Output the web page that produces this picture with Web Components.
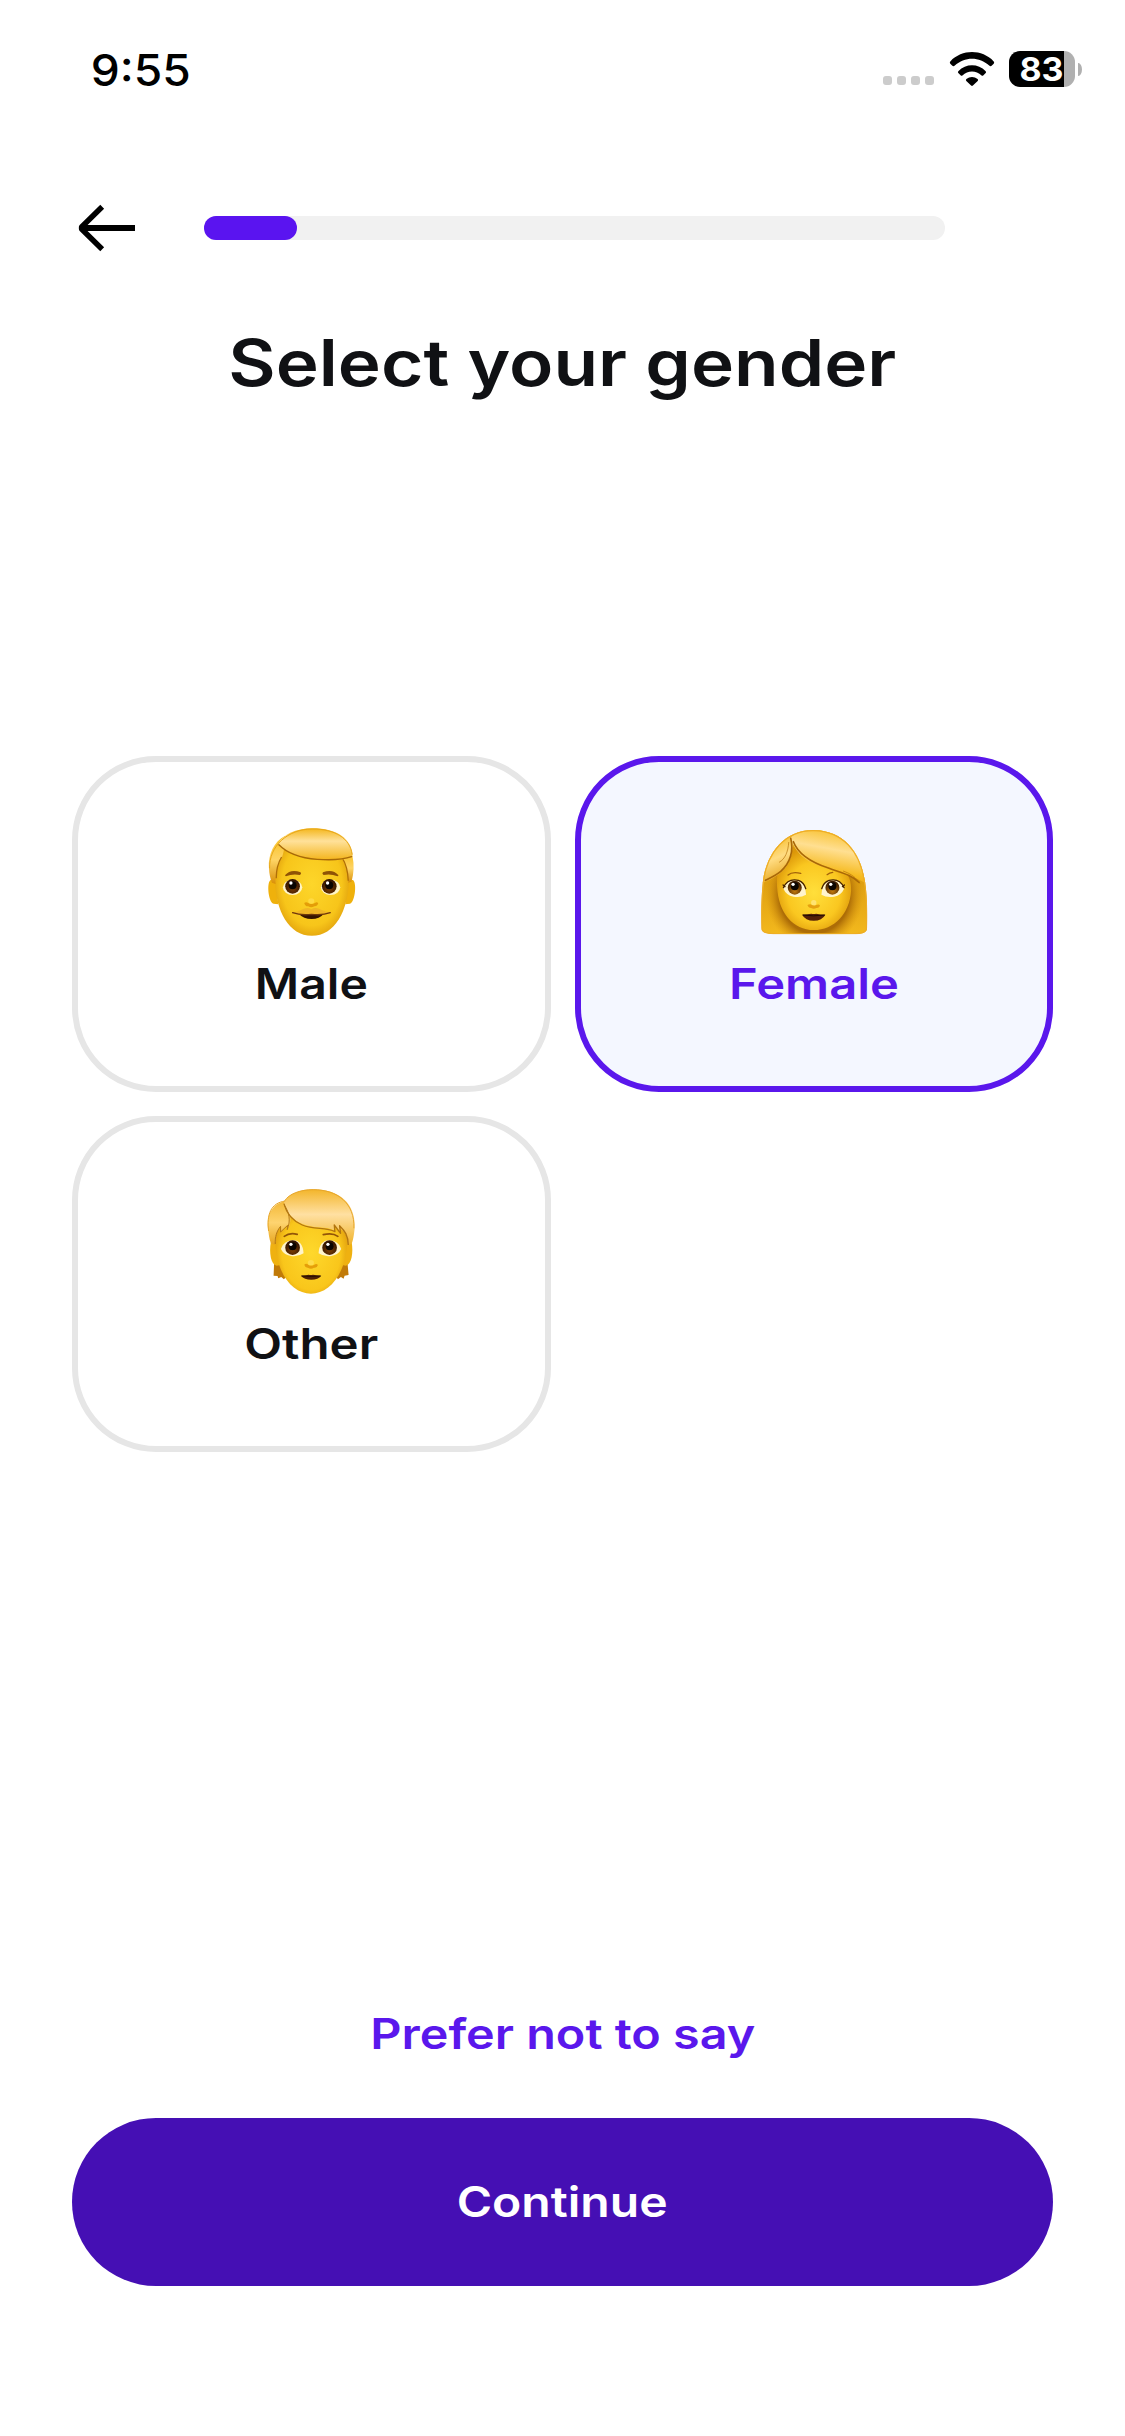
<!DOCTYPE html>
<html lang="en">
<head>
<meta charset="utf-8">
<title>Select your gender</title>
<style>
    body{
        margin: 0;
        background: #fff;
        font-family: Inter, "Liberation Sans", sans-serif;
        color: #101114;
    }
</style>
</head>
<body>
<gender-screen></gender-screen>

<script>
function addTemplate(element, html){
    const template = document.createElement("template");
    template.innerHTML = html;
    element.attachShadow({mode:"open"});
    element.shadowRoot.appendChild(template.content.cloneNode(true));
}

//==============================================================================
class WideText extends HTMLElement{
    constructor() {
        super();
        addTemplate(this, `
            <style>
            :host{ display: flex; justify-content: center; white-space: nowrap; }
            span{ display: inline-block; flex: none; }
            </style>
            <span><slot></slot></span>
        `);
    }
    connectedCallback() {
        const width = Number(this.getAttribute("width"));
        const span = this.shadowRoot.querySelector("span");
        this.style.width = width + "px";
        span.style.transform = "scaleX(" + width / span.getBoundingClientRect().width + ")";
    }
}

//==============================================================================
class StatusBar extends HTMLElement{
    constructor() {
        super();
        addTemplate(this, `
            <style>
            :host{
                display: flex;
                justify-content: space-between;
                box-sizing: border-box;
                height: 138px;
                padding: 42px 43px 0 91px;
                color: #000;
            }
            .time{
                margin-top: 1px;
                font-size: 44px;
                line-height: 54px;
                font-weight: 540;
            }
            .right{ display: flex; align-items: flex-start; }
            .dots{ display: flex; gap: 5px; margin-top: 34px; }
            .dots i{ width: 9px; height: 9px; border-radius: 3px; background: #ccc; }
            .wifi{ margin: 9px 0 0 14px; }
            .battery{
                display: flex;
                align-items: center;
                justify-content: center;
                box-sizing: border-box;
                width: 66px;
                height: 36px;
                margin: 9px 3px 0 13px;
                padding-right: 2px;
                border-radius: 11px;
                background: linear-gradient(90deg, #000 55px, #b0b0b0 55px);
                color: #fff;
                font-size: 33px;
                line-height: 36px;
                font-weight: 700;
            }
            .cap{
                width: 4px;
                height: 13px;
                margin: 21px 0 0 0;
                border-radius: 0 4px 4px 0 / 0 7px 7px 0;
                background: #b0b0b0;
            }
            </style>
            <wide-text class="time" width="100">9:55</wide-text>
            <div class="right">
                <div class="dots"><i></i><i></i><i></i><i></i></div>
                <svg class="wifi" width="48" height="36" viewBox="0 0 48 36">
                    <path d="M2.300 12.800a2 2 0 0 1 0-2.400C14-2 34-2 45.700 10.400a2 2 0 0 1 0 2.400l-1.800 1.800a2 2 0 0 1-2.700 0C31.500 5.400 16.500 5.400 6.800 14.600a2 2 0 0 1-2.700 0z"/>
                    <path d="M10.300 20.200C18 12.300 30 12.300 37.700 20.200q.8.900 0 1.800l-2.500 2.400q-.8.600-1.600 0C28 19.200 20 19.200 14.400 24.400q-.8.600-1.600 0L10.300 22q-.8-.9 0-1.800z"/>
                    <path d="M18.400 28c3.300-2.800 7.900-2.800 11.200 0q1 .9.100 1.900l-4.800 4.700q-.9.800-1.800 0l-4.800-4.700q-.9-1 .1-1.900z"/>
                </svg>
                <div class="battery"><wide-text width="44">83</wide-text></div>
                <div class="cap"></div>
            </div>
        `);
    }
}

//==============================================================================
class StepHeader extends HTMLElement{
    constructor() {
        super();
        addTemplate(this, `
            <style>
            :host{ display: flex; align-items: center; height: 180px; padding: 0 180px 0 78px; }
            svg{ flex: none; }
            .track{
                flex: 1;
                height: 24px;
                margin-left: 66px;
                border-radius: 12px;
                background: #f1f1f1;
            }
            .fill{ height: 24px; border-radius: 12px; background: #5a14f0; }
            </style>
            <svg width="60" height="60" viewBox="0 0 60 60" fill="none" stroke="#000" stroke-width="5.500">
                <path d="M57 30H4" stroke-width="6"/>
                <path d="M24.200 8.800L3.600 29v2L24.200 51.200" stroke-linejoin="round"/>
            </svg>
            <div class="track"><div class="fill"></div></div>
        `);
    }
    connectedCallback() {
        this.shadowRoot.querySelector(".fill").style.width = this.getAttribute("value") + "%";
    }
}

//==============================================================================
const faces = {
    male: `
        <svg width="125" height="125" viewBox="-3.75 0 375 375">
            <defs>
                <radialGradient id="skin" cx=".5" cy=".5" r=".62">
                    <stop offset="0" stop-color="#fdd62a"/><stop offset=".65" stop-color="#f7c51a"/><stop offset="1" stop-color="#d48b05"/>
                </radialGradient>
                <linearGradient id="hair" x1="0" y1="0" x2="0" y2="1">
                    <stop offset="0" stop-color="#f4b61b"/><stop offset=".4" stop-color="#ffe19a"/><stop offset="1" stop-color="#f3b41a"/>
                </linearGradient>
                <linearGradient id="side" x1="0" y1="0" x2="0" y2="1">
                    <stop offset="0" stop-color="#f7bf20"/><stop offset=".5" stop-color="#fed465"/><stop offset="1" stop-color="#d98f08"/>
                </linearGradient>
                <radialGradient id="iris" cx=".5" cy=".65" r=".6">
                    <stop offset="0" stop-color="#7a3d04"/><stop offset="1" stop-color="#321300"/>
                </radialGradient>
            </defs>
            <path fill="#efb10c" d="M62 195c-13 2-9 66 8 71l14 2-7-72zM307 195c13 2 9 66-8 71l-14 2 7-72z"/>
            <path fill="url(#skin)" d="M185 52c-82 0-114 57-111 142 2 94 42 168 111 168s109-74 111-168c3-85-29-142-111-142z"/>
            <path fill="url(#side)" d="M105 62c-34 17-52 57-49 97 1 18 4 31 9 44l11 4c-2-25 4-55 17-77 9-15 10-40 12-68z"/>
            <path fill="url(#side)" d="M277 128c11 17 17 46 17 75l10-3c7-26 8-51 3-75l-13-9z"/>
            <path fill="none" stroke="#b06f09" stroke-width="4" d="M276 129c11 17 17 43 18 68M78 190c0-24 6-48 16-64"/>
            <path fill="url(#hair)" d="M84 86c15-27 52-46 102-46 75 0 120 31 121 85-24 10-63 13-106 9-56-5-94-21-117-48z"/>
            <path fill="none" stroke="#a86a08" stroke-width="4" stroke-linecap="round" d="M86 89c27 28 64 40 115 44 43 3 78 1 103-8"/>
            <path fill="none" stroke="#e8a718" stroke-width="3" d="M58 160c-2-66 54-118 128-118 68 0 113 27 120 77"/>
            <ellipse cx="127" cy="217" rx="29" ry="23" fill="#fff5c8"/>
            <ellipse cx="241" cy="217" rx="29" ry="23" fill="#fff5c8"/>
            <circle cx="127" cy="214" r="22" fill="url(#iris)"/>
            <circle cx="237" cy="214" r="22" fill="url(#iris)"/>
            <circle cx="127" cy="211" r="12" fill="#0a0502"/>
            <circle cx="237" cy="211" r="12" fill="#0a0502"/>
            <circle cx="122" cy="204" r="5" fill="#fff"/>
            <circle cx="232" cy="204" r="5" fill="#fff"/>
            <path fill="#8f5306" d="M104 181q18-21 47-9 4 5-2 8-21-5-42 4zM265 181q-18-21-47-9-4 5 2 8 21-5 42 4z"/>
            <path fill="#e49d08" d="M162 264q6-5 12 0 10 6 20 0 6-5 10 1-3 10-12 9-9 6-18 0-9 1-12-10z"/>
            <ellipse cx="183" cy="258" rx="9" ry="8" fill="#ffda43"/>
            <path fill="#361500" d="M146 297q37 5 74 0-12 15-36 15t-38-15z"/>
            <path fill="#f0b626" d="M126 291c18 2 29-11 45-12q7 0 12 4 6-4 13-4c16 1 27 14 45 12 3 6-8 8-25 8h-65c-17 0-28-2-25-8z"/>
            <path fill="none" stroke="#70390a" stroke-width="4" stroke-linecap="round" d="M127 293q25 9 57 5 31 4 56-5"/>
        </svg>`,
    female: `
        <svg width="125" height="125" viewBox="18.75 0 375 375">
            <defs>
                <radialGradient id="skin" cx=".5" cy=".55" r=".55">
                    <stop offset="0" stop-color="#ffdf3b"/><stop offset=".65" stop-color="#fac720"/><stop offset="1" stop-color="#dc9709"/>
                </radialGradient>
                <linearGradient id="back" x1="0" y1="0" x2="0" y2="1">
                    <stop offset="0" stop-color="#eaa712"/><stop offset=".5" stop-color="#dfa011"/><stop offset="1" stop-color="#f4ba1e"/>
                </linearGradient>
                <linearGradient id="hair" x1=".65" y1="0" x2=".4" y2="1">
                    <stop offset="0" stop-color="#f7bd22"/><stop offset=".38" stop-color="#ffdf91"/><stop offset=".75" stop-color="#f6bb20"/><stop offset="1" stop-color="#e3a112"/>
                </linearGradient>
                <linearGradient id="left" x1=".2" y1="0" x2=".5" y2="1">
                    <stop offset="0" stop-color="#f5b618"/><stop offset=".5" stop-color="#ffdc82"/><stop offset="1" stop-color="#e5a316"/>
                </linearGradient>
                <radialGradient id="shade">
                    <stop offset=".72" stop-color="#ad6d07"/><stop offset="1" stop-color="#d8960f" stop-opacity="0"/>
                </radialGradient>
                <radialGradient id="iris" cx=".5" cy=".75" r=".65">
                    <stop offset="0" stop-color="#c57b0d"/><stop offset="1" stop-color="#3d1b00"/>
                </radialGradient>
                <clipPath id="shape"><path d="M208 45C122 43 67 111 55 195c-4 35-7 85-5 144 0 15 15 18 44 19h230c29-1 43-4 43-19 2-59-1-109-7-144-13-86-65-148-152-150z"/></clipPath>
            </defs>
            <g clip-path="url(#shape)">
                <path fill="url(#back)" d="M40 40h340v330H40z"/>
                <ellipse cx="209" cy="240" rx="147" ry="160" fill="url(#shade)"/>
                <path fill="url(#skin)" d="M145 95C105 125 94 167 97 215c4 79 49 130 110 130s108-49 112-118c1-26-5-46-23-62z"/>
                <path fill="url(#left)" d="M146 62C84 78 54 132 52 205c36-15 71-34 84-72 8-25 8-46 10-71z"/>
                <path fill="url(#hair)" d="M137 71c12-20 39-32 72-32 89 0 151 71 158 168-20-12-41-19-65-29-58-20-112-27-145-71-9-12-14-24-20-36z"/>
                <path fill="none" stroke="#a96807" stroke-width="5" stroke-linecap="round" d="M138 70c9 37-1 74-30 99-13 11-32 20-46 27M146 80c16 43 63 65 105 79 36 14 66 18 92 43"/>
                <path fill="none" stroke="#b5730b" stroke-width="2" d="M103 142c18-10 27-31 29-61M295 168c25 9 39 20 50 37"/>
                <path fill="none" stroke="#eead25" stroke-width="7" d="M208 45C122 43 67 111 55 195c-4 35-7 85-5 144 0 15 15 18 44 19h230c29-1 43-4 43-19 2-59-1-109-7-144-13-86-65-148-152-150z"/>
            </g>
            <path fill="#fff4cc" d="M116 221q13-33 46-24 20 9 22 42-16 10-38 6-22-5-30-24zM298 221q-13-33-46-24-20 9-22 42 16 10 38 6 22-5 30-24z"/>
            <circle cx="150" cy="218" r="21" fill="url(#iris)"/>
            <circle cx="263" cy="218" r="21" fill="url(#iris)"/>
            <circle cx="150" cy="214" r="12" fill="#0b0603"/>
            <circle cx="263" cy="214" r="12" fill="#0b0603"/>
            <circle cx="145" cy="208" r="5" fill="#fff"/>
            <circle cx="258" cy="208" r="5" fill="#fff"/>
            <path fill="none" stroke="#432000" stroke-width="4" stroke-linecap="round" d="M116 218q13-29 45-22 17 6 22 25M298 218q-13-29-45-22-17 6-22 25M115 210l6 5M299 210l-6 5"/>
            <path fill="none" stroke="#a3630b" stroke-width="4" stroke-linecap="round" d="M130 180q12-11 38-5M247 179q7-6 17-7"/>
            <path fill="#e5a010" d="M188 270q8-5 15 0 7 3 14-1 6-2 9 3-4 8-11 7-8 5-16 0-8 0-11-9z"/>
            <ellipse cx="207" cy="263" rx="8" ry="8" fill="#ffe372"/>
            <path fill="#542008" d="M172 299q16-2 28-3 7 2 14 0 14 3 28 3-10 18-35 18t-35-18z"/>
            <path fill="none" stroke="#1f0b02" stroke-width="3" d="M174 300q31 5 66 0"/>
        </svg>`,
    other: `
        <svg width="125" height="125" viewBox="-3.75 0 375 375">
            <defs>
                <radialGradient id="skin" cx=".5" cy=".55" r=".58">
                    <stop offset="0" stop-color="#fed82c"/><stop offset=".7" stop-color="#f9c61b"/><stop offset="1" stop-color="#d99108"/>
                </radialGradient>
                <linearGradient id="hair" x1="0" y1="0" x2="0" y2="1">
                    <stop offset="0" stop-color="#f3b52a"/><stop offset=".45" stop-color="#ffe0a2"/><stop offset="1" stop-color="#f0b32a"/>
                </linearGradient>
                <linearGradient id="side" x1="0" y1="0" x2="0" y2="1">
                    <stop offset="0" stop-color="#f3b735"/><stop offset=".5" stop-color="#fed470"/><stop offset="1" stop-color="#e6a41d"/>
                </linearGradient>
                <radialGradient id="iris" cx=".5" cy=".65" r=".6">
                    <stop offset="0" stop-color="#804104"/><stop offset="1" stop-color="#321300"/>
                </radialGradient>
            </defs>
            <path fill="#c17a08" d="M72 255l-2 47 12 1 2 7 9-4 8 7 10-11-12-49zM291 255l4 45-12 2-3 9-8-5-9 7-7-11 15-49z"/>
            <path fill="#efb111" d="M62 200c-6 33 0 68 17 72l12-2-9-76zM304 200c6 33 0 68-17 72l-12-2 9-76z"/>
            <path fill="url(#skin)" d="M182 82c-75 0-108 39-107 113 2 101 51 161 107 161s107-60 109-161c1-74-34-113-109-113z"/>
            <path fill="url(#side)" d="M111 77C66 84 49 118 53 158c2 18 4 34 9 47l12 4c0-22 4-38 18-55l-1 17 21-20-2 15c14-17 15-62 1-89z"/>
            <path fill="url(#hair)" d="M101 83c12-26 48-40 88-40 76 0 130 42 124 119-2 19-4 32-9 45l-11 3c0-22-7-38-22-49l-4-9 2 20-16-19 1 14c-27-15-60-4-98-20-28-12-45-31-55-64z"/>
            <path fill="none" stroke="#b27510" stroke-width="4" stroke-linejoin="round" d="M101 86c9 33 28 53 55 64 38 16 70 4 98 20l-2-20 19 25-3-23c15 15 26 29 26 58"/>
            <path fill="none" stroke="#b47815" stroke-width="3" d="M103 92c14 20 19 45 8 72l1-13-21 20v-17c-12 14-17 32-16 53"/>
            <path fill="none" stroke="#e7a62b" stroke-width="3" d="M105 78C61 84 49 119 55 168M103 78c13-22 48-34 86-34 72 0 125 40 122 116"/>
            <path fill="#fff4cb" d="M92 222q8-26 38-26 28 2 30 39-16 11-38 8-22-4-30-21zM273 222q-8-26-38-26-28 2-30 39 16 11 38 8 22-4 30-21z"/>
            <circle cx="127" cy="218" r="22" fill="url(#iris)"/>
            <circle cx="238" cy="218" r="22" fill="url(#iris)"/>
            <circle cx="127" cy="214" r="12" fill="#0a0502"/>
            <circle cx="238" cy="214" r="12" fill="#0a0502"/>
            <circle cx="122" cy="208" r="5" fill="#fff"/>
            <circle cx="233" cy="208" r="5" fill="#fff"/>
            <path fill="none" stroke="#935608" stroke-width="5" stroke-linecap="round" d="M102 184q16-12 39-6M263 184q-16-12-44-5"/>
            <path fill="#e59e0a" d="M162 269q6-5 12 0 9 5 18 0 7-5 11 1-3 10-12 8-9 6-18 0-8 1-11-9z"/>
            <ellipse cx="182" cy="263" rx="9" ry="8" fill="#ffdc4b"/>
            <path fill="#4f2104" d="M152 302q17-2 23-3 7 2 13 0 10 1 25 3-9 12-30 12t-31-12z"/>
            <path fill="none" stroke="#261002" stroke-width="3" d="M154 303q29 3 57 0"/>
        </svg>`
};

class GenderCard extends HTMLElement{
    constructor() {
        super();
        addTemplate(this, `
            <style>
            :host{
                display: flex;
                flex-direction: column;
                align-items: center;
                box-sizing: border-box;
                height: 336px;
                padding-top: 53px;
                border: 6px solid #e6e6e6;
                border-radius: 84px;
                font-size: 42px;
                line-height: 50px;
                font-weight: 600;
            }
            :host([selected]){
                border-color: #5a17ec;
                background: #f4f7ff;
                color: #5a17ec;
            }
            .face{ height: 125px; margin-bottom: 19px; }
            svg{ display: block; }
            </style>
            <div class="face"></div>
            <slot></slot>
        `);
    }
    connectedCallback() {
        this.shadowRoot.querySelector(".face").innerHTML = faces[this.getAttribute("face")];
    }
}

//==============================================================================
class MainButton extends HTMLElement{
    constructor() {
        super();
        addTemplate(this, `
            <style>
            :host{
                display: flex;
                align-items: center;
                justify-content: center;
                height: 168px;
                border-radius: 84px;
                background: #450fb4;
                color: #fff;
            }
            </style>
            <slot></slot>
        `);
    }
}

//==============================================================================
class GenderScreen extends HTMLElement{
    constructor() {
        super();
        addTemplate(this, `
            <style>
            :host{
                display: flex;
                flex-direction: column;
                width: 1125px;
                height: 2436px;
            }
            h1{
                display: flex;
                justify-content: center;
                margin: 5px 0 0;
                font-size: 64px;
                line-height: 80px;
                font-weight: 600;
            }
            .cards{
                display: grid;
                grid-template-columns: 1fr 1fr;
                gap: 24px;
                margin: 353px 72px 0;
            }
            footer{
                margin: auto 72px 150px;
                font-size: 42px;
                line-height: 50px;
                font-weight: 600;
            }
            .skip{
                display: flex;
                justify-content: center;
                margin-bottom: 59px;
                color: #5a17ec;
            }
            </style>
            <status-bar></status-bar>
            <step-header value="12.500"></step-header>
            <h1><wide-text width="668">Select your gender</wide-text></h1>
            <div class="cards">
                <gender-card face="male"><wide-text width="113">Male</wide-text></gender-card>
                <gender-card face="female" selected><wide-text width="170">Female</wide-text></gender-card>
                <gender-card face="other"><wide-text width="134">Other</wide-text></gender-card>
            </div>
            <footer>
                <div class="skip"><wide-text width="385">Prefer not to say</wide-text></div>
                <main-button><wide-text width="211">Continue</wide-text></main-button>
            </footer>
        `);
    }
}

window.customElements.define("wide-text", WideText);
window.customElements.define("status-bar", StatusBar);
window.customElements.define("step-header", StepHeader);
window.customElements.define("gender-card", GenderCard);
window.customElements.define("main-button", MainButton);
window.customElements.define("gender-screen", GenderScreen);
</script>
</body>
</html>
